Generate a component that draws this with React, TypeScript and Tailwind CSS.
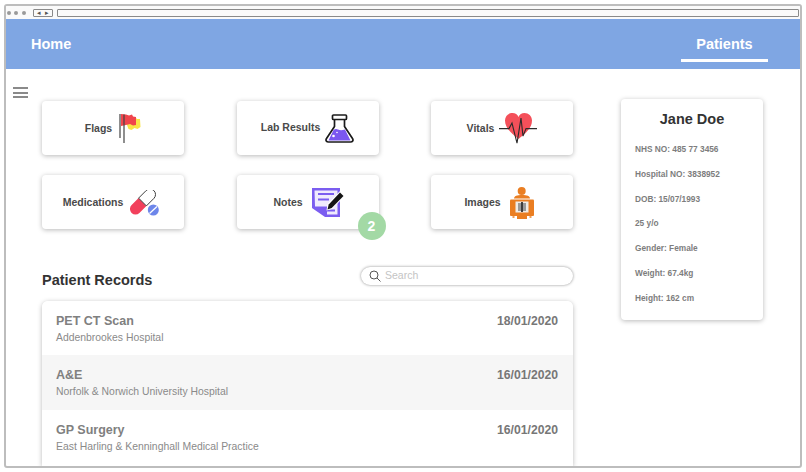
import type { ReactNode } from "react";

const font = { fontFamily: '"Liberation Sans", Arial, sans-serif' };

function FlagIcon() {
  return (
    <svg width="22" height="29" viewBox="0 0 22 29">
      <path d="M8 6l6-1 2-2 2 2 3 0 .5 8-3 2-3-1-3 2-3-1-1.500-4z" fill="#f9e547" />
      <path d="M2 0l5 .5 3 1 3-1 1 2 3 .5 0 8-3 .5-3-1.500-4 1-5 1z" fill="#f0454c" />
      <path d="M1 0v24M5 .5v28.500" stroke="#444" strokeWidth="1.200" fill="none" />
    </svg>
  );
}

function FlaskIcon() {
  return (
    <svg width="29" height="29" viewBox="0 0 29 29">
      <path d="M3.500 26.500h22l-5.500-11c-3 1-5 1-7 0s-3-.500-4.500.5z" fill="#7b57f0" />
      <circle cx="8.500" cy="22" r="1.300" fill="#fff" />
      <circle cx="12" cy="18.500" r=".8" fill="#fff" />
      <path
        d="M9.500 6v6.500L1.500 24.500c-1.200 2 0 3.500 2 3.500h22c2 0 3.200-1.500 2-3.500l-8-12V6"
        stroke="#1b1b1b"
        strokeWidth="1.700"
        fill="none"
        strokeLinejoin="round"
      />
      <rect x="7.500" y="1" width="14" height="4.500" rx="1" stroke="#1b1b1b" strokeWidth="1.700" fill="none" />
    </svg>
  );
}

function HeartIcon() {
  return (
    <svg width="38" height="31" viewBox="0 0 38 31">
      <path d="M19.500 26C12 20 6 15 6 7.500 6 3 9.500 0 13.500 0c2.800 0 5 1.500 6 4 1-2.500 3.200-4 6-4C29.500 0 33 3 33 7.500 33 15 27 20 19.500 26z" fill="#f4505a" />
      <path
        d="M0 15.600h10l3-5.500 3 12 2 8 4-25 2 18 3-7.500h11"
        stroke="#2b2b2b"
        strokeWidth="1.100"
        fill="none"
      />
    </svg>
  );
}

function PillIcon() {
  return (
    <svg width="29" height="26" viewBox="0 0 29 26">
      <path d="M8.600 8.100l-7 7a5.500 5.500 0 0 0 7.800 7.800l7-7z" fill="#f2405c" />
      <path
        d="M8.600 8.100l7.500-7.500a5.500 5.500 0 0 1 7.800 7.800l-7.500 7.500z"
        stroke="#3c3c3c"
        strokeWidth="1"
        fill="#fff"
      />
      <circle cx="23.300" cy="20" r="5.500" fill="#6d86ea" />
      <path d="M19.500 23.500l7.500-7" stroke="#fff" strokeWidth="1.300" />
    </svg>
  );
}

function NotesIcon() {
  return (
    <svg width="33" height="30" viewBox="0 0 33 30">
      <path d="M0 0h28v29H13L0 20z" fill="#7b5df0" />
      <path d="M2.500 2.500h23v24H15v-8H3z" fill="#efeafd" />
      <path d="M6 6h16M6 11.500h11" stroke="#7b5df0" strokeWidth="2.200" />
      <path d="M15 22.500h8" stroke="#7b5df0" strokeWidth="2" />
      <path d="M14.500 22.500l1-6.500L28 3l5 5-13 13z" fill="#fff" />
      <path d="M15.500 21.500l1.200-5L28 4.500l3.500 3.500-11.800 12z" fill="#151515" />
    </svg>
  );
}

function XrayIcon() {
  return (
    <svg width="24" height="32" viewBox="0 0 24 32">
      <circle cx="11.700" cy="4" r="4" fill="#ea7e22" />
      <path d="M4 11.500c0-2.500 3-3.500 8-3.500s8 1 8 3.500z" fill="#ea7e22" />
      <rect x="0" y="12.500" width="24" height="16.500" rx="1" fill="#ea7e22" />
      <rect x="5.500" y="14.500" width="13" height="11" fill="#efece8" />
      <rect x="8" y="16" width="8" height="8" fill="#9a9a9a" />
      <path d="M12 15v10" stroke="#333" strokeWidth="1.800" />
      <rect x="7" y="29" width="10" height="3" fill="#ea7e22" />
      <path d="M2.500 30h2M19.500 30h2" stroke="#ea7e22" strokeWidth="1.500" />
    </svg>
  );
}

function Tile({ label, icon, spacing, badge }: { label: string; icon: ReactNode; spacing: string; badge?: string }) {
  return (
    <div className={`relative flex h-[54px] w-[142px] items-center justify-center rounded bg-white shadow-[0_1px_5px_rgba(0,0,0,0.28)] ${spacing}`}>
      <span className="text-[10.500px] font-bold text-[#4a4a4a]">{label}</span>
      {icon}
      {badge && (
        <span className="absolute -bottom-[11px] -right-[7px] flex h-7 w-7 items-center justify-center rounded-full bg-[#a3d9a5] text-sm font-bold text-white">
          {badge}
        </span>
      )}
    </div>
  );
}

const records = [
  { title: "PET CT Scan", place: "Addenbrookes Hospital", date: "18/01/2020" },
  { title: "A&E", place: "Norfolk & Norwich University Hospital", date: "16/01/2020" },
  { title: "GP Surgery", place: "East Harling & Kenninghall Medical Practice", date: "16/01/2020" },
];

const details = [
  "NHS NO: 485 77 3456",
  "Hospital NO: 3838952",
  "DOB: 15/07/1993",
  "25 y/o",
  "Gender: Female",
  "Weight: 67.4kg",
  "Height: 162 cm",
];

export default function App() {
  return (
    <div className="h-[472px] w-[806px] overflow-hidden bg-white p-[4px]" style={font}>
      <div className="flex h-full flex-col overflow-hidden rounded-[3px] border-2 border-[#bdbdbd]">
        {/* browser chrome */}
        <div className="flex h-[13px] shrink-0 items-center bg-[#fafafa] px-[1px]">
          <span className="h-[4px] w-[4px] rounded-full bg-[#9a9a9a]" />
          <span className="ml-[3px] h-[4px] w-[4px] rounded-full bg-[#9a9a9a]" />
          <span className="ml-[4px] h-[4px] w-[4px] rounded-full bg-[#9a9a9a]" />
          <span className="ml-[7px] flex h-[8px] w-[20px] items-center justify-center gap-[4px] rounded-[1px] border border-[#8a8a8a] text-[7px] leading-none text-[#555]">
            <span>◂</span>
            <span>▸</span>
          </span>
          <span className="ml-[4px] h-[8px] flex-1 rounded-[1px] border border-[#8a8a8a] bg-[#fafafa]" />
        </div>

        <header className="flex h-[50px] shrink-0 bg-[#7fa6e3] pl-[25px] pr-[32px] font-bold text-white">
          <span className="mt-[15px] text-[14.500px] leading-[20px]">Home</span>
          <div className="ml-auto flex h-[43px] w-[87px] items-start justify-center border-b-[3px] border-white pt-[15px]">
            <span className="text-[14.500px] leading-[20px]">Patients</span>
          </div>
        </header>

        <main className="flex min-h-0 flex-1">
          <div className="w-[36px] shrink-0 pl-[7px] pt-[18px]">
            <div className="flex w-[15px] flex-col gap-[2.500px]">
              <span className="h-[2px] bg-[#8a8a8a]" />
              <span className="h-[2px] bg-[#8a8a8a]" />
              <span className="h-[2px] bg-[#8a8a8a]" />
            </div>
          </div>

          <div className="flex w-[531px] shrink-0 flex-col pt-[32px]">
            <div className="grid grid-cols-[142px_142px_142px] justify-between gap-y-[20px]">
              <Tile label="Flags" icon={<FlagIcon />} spacing="gap-[7px] pt-[1px]" />
              <Tile label="Lab Results" icon={<FlaskIcon />} spacing="gap-[5px]" />
              <Tile label="Vitals" icon={<HeartIcon />} spacing="gap-[5px] pt-[1px]" />
              <Tile label="Medications" icon={<PillIcon />} spacing="gap-[7px] pr-[4px] pt-[1px]" />
              <Tile label="Notes" icon={<NotesIcon />} spacing="gap-[9px] pl-[3px] pt-[1px]" badge="2" />
              <Tile label="Images" icon={<XrayIcon />} spacing="gap-[9px] pr-[6px] pt-[1px]" />
            </div>

            <div className="mt-[38px] flex items-start justify-between">
              <h2 className="mt-[4px] text-[14.500px] font-bold leading-[18px] text-[#333]">Patient Records</h2>
              <div className="flex h-[18px] w-[212px] items-center gap-[4px] rounded-full bg-white pl-[8px] shadow-[0_0_3px_rgba(0,0,0,0.45)]">
                <svg width="12" height="12" viewBox="0 0 12 12" fill="none" stroke="#555" strokeWidth="1">
                  <circle cx="5" cy="5" r="4" />
                  <path d="M8 8l3.500 3.500" />
                </svg>
                <span className="text-[10.500px] text-[#c4c4c4]">Search</span>
              </div>
            </div>

            <div className="mt-[12px] flex-1 overflow-hidden rounded-t-md bg-white shadow-[0_1px_5px_rgba(0,0,0,0.28)]">
              {records.map((r, i) => (
                <div
                  key={r.title}
                  className={`flex h-[54.250px] justify-between pl-[14px] pr-[15px] pt-[12px] ${i === 1 ? "bg-[#f6f6f6]" : "bg-white"}`}
                >
                  <div>
                    <div className="text-[12.500px] font-bold leading-[16px] text-[#808080]">{r.title}</div>
                    <div className="mt-[2px] text-[10.400px] leading-[14px] text-[#8a8a8a]">{r.place}</div>
                  </div>
                  <div className="text-[12.200px] font-bold leading-[16px] text-[#777]">{r.date}</div>
                </div>
              ))}
            </div>
          </div>

          <aside className="ml-[48px] mt-[30px] h-[221px] w-[142px] rounded bg-white px-[14px] pt-[11px] shadow-[0_1px_5px_rgba(0,0,0,0.28)]">
            <h3 className="text-center text-[14.500px] font-bold leading-[18px] text-[#333]">Jane Doe</h3>
            <div className="mt-[16px] flex flex-col gap-[13.800px]">
              {details.map((d) => (
                <p key={d} className="text-[8.300px] font-bold leading-[11px] text-[#7d7d7d]">
                  {d}
                </p>
              ))}
            </div>
          </aside>
        </main>
      </div>
    </div>
  );
}
